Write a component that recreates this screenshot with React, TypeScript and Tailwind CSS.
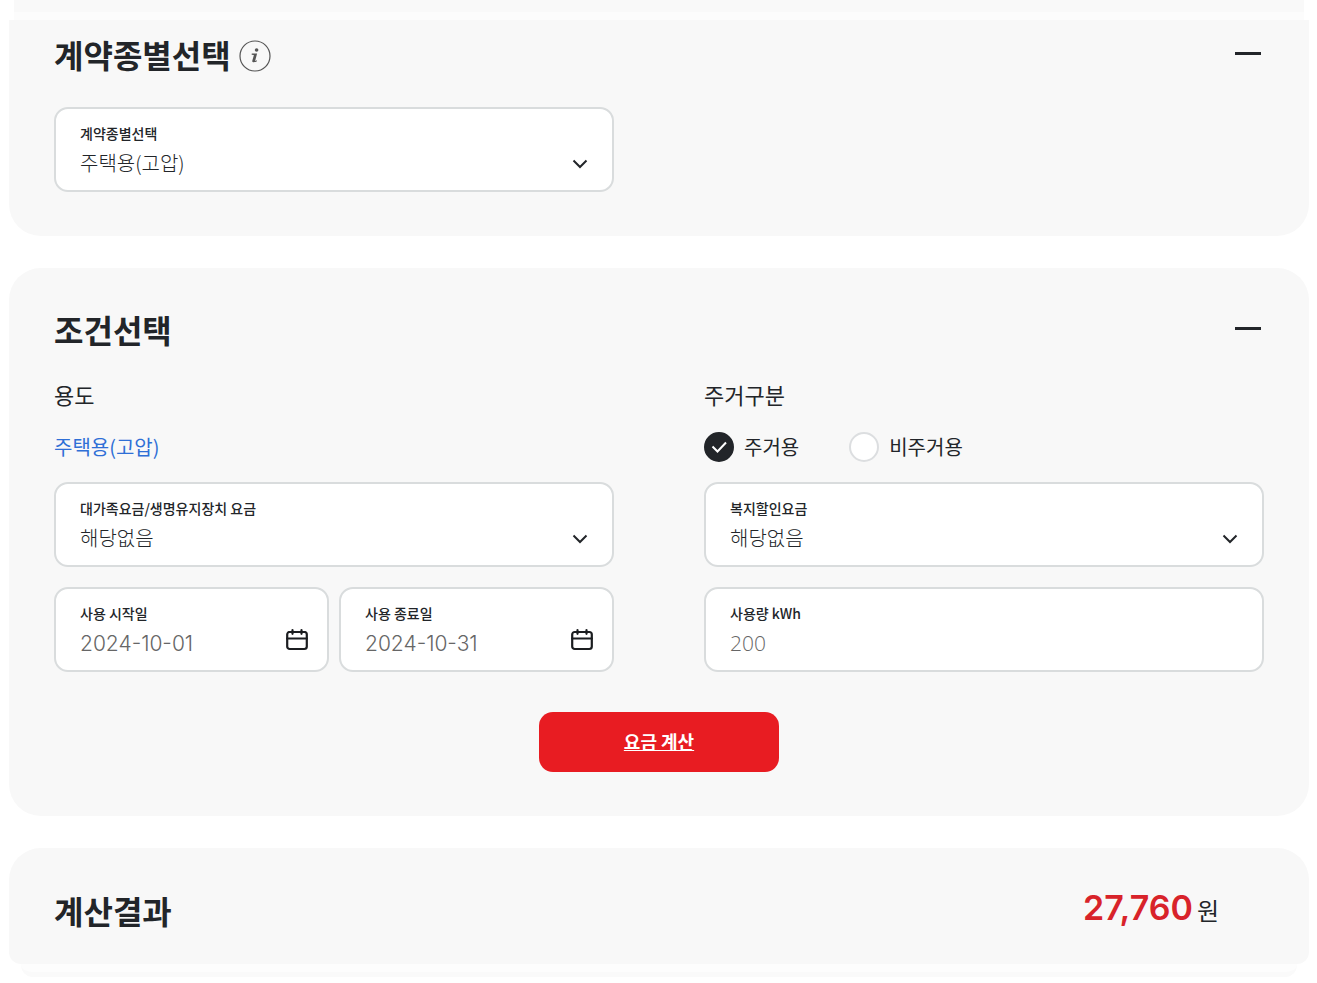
import { useState } from 'react';
import type { ReactNode } from 'react';

const boxClass =
  'rounded-[14px] border-2 border-[#d9dcdd] bg-white px-6 pt-[14px] pb-[11px] focus-within:border-[#222529]';

interface SelectBoxProps {
  id: string;
  label: string;
  options: string[];
}

function SelectBox({ id, label, options }: SelectBoxProps) {
  return (
    <div className={`relative ${boxClass}`}>
      <label htmlFor={id} className="block text-sm leading-5 font-medium">
        {label}
      </label>
      <select
        id={id}
        className="mt-1 block h-8 w-full appearance-none bg-transparent text-xl font-light text-[#222529] outline-none"
      >
        {options.map(option => (
          <option key={option}>{option}</option>
        ))}
      </select>
      <svg
        className="pointer-events-none absolute right-6 bottom-[18px] h-4 w-4"
        viewBox="0 0 16 16"
        fill="none"
        stroke="#222529"
        strokeWidth="2"
      >
        <path d="M1.5 4.5 8 11l6.5-6.5" />
      </svg>
    </div>
  );
}

interface DateBoxProps {
  id: string;
  label: string;
  defaultValue: string;
}

function DateBox({ id, label, defaultValue }: DateBoxProps) {
  return (
    <div className={`min-w-0 flex-1 ${boxClass}`}>
      <label htmlFor={id} className="block text-sm leading-5 font-medium">
        {label}
      </label>
      <div className="mt-1 flex items-start">
        <input
          id={id}
          type="text"
          defaultValue={defaultValue}
          className="h-8 w-full min-w-0 bg-transparent font-['Inter',sans-serif] text-[21px] font-light text-[#666] outline-none"
        />
        <button type="button" aria-label={`${label} 선택`} className="-mr-[6px] shrink-0">
          <svg
            className="mt-px h-6 w-6"
            viewBox="0 0 24 24"
            fill="none"
            stroke="#1b1d20"
            strokeWidth="2.2"
            strokeLinecap="round"
          >
            <rect x="2.2" y="4" width="19.6" height="17" rx="2.5" />
            <path d="M2.2 10.5h19.6M7.5 2.2v3.6M16.5 2.2v3.6" />
          </svg>
        </button>
      </div>
    </div>
  );
}

interface RadioProps {
  label: string;
  checked: boolean;
  onChange: () => void;
}

function Radio({ label, checked, onChange }: RadioProps) {
  return (
    <label className="flex items-center gap-[10px] text-xl leading-[30px]">
      <span className="relative flex">
        <input
          type="radio"
          name="residence"
          checked={checked}
          onChange={onChange}
          className="h-[30px] w-[30px] appearance-none rounded-full border-2 border-[#dcdee0] bg-white checked:border-[#222529] checked:bg-[#222529]"
        />
        {checked && (
          <svg
            className="pointer-events-none absolute inset-0 h-[30px] w-[30px]"
            viewBox="0 0 30 30"
            fill="none"
            stroke="#fff"
            strokeWidth="2"
          >
            <path d="M8.5 14.5 13.5 19.5 22 10.5" />
          </svg>
        )}
      </span>
      {label}
    </label>
  );
}

interface PanelHeaderProps {
  title: string;
  open: boolean;
  onToggle: () => void;
  children?: ReactNode;
}

function PanelHeader({ title, open, onToggle, children }: PanelHeaderProps) {
  return (
    <div className="flex items-center justify-between">
      <div className="flex items-center gap-2">
        <h2 className="text-[32px] leading-[48px] font-bold">{title}</h2>
        {children}
      </div>
      <button
        type="button"
        aria-label={title}
        aria-expanded={open}
        onClick={onToggle}
        className="mr-[3px] mb-[2px] flex h-[26px] w-[26px] items-center"
      >
        <span className="h-[3px] w-full bg-[#222529]" />
      </button>
    </div>
  );
}

function InfoIcon() {
  return (
    <svg className="mt-1 h-8 w-8" viewBox="0 0 32 32" fill="none">
      <circle cx="16" cy="16" r="15" stroke="#555" strokeWidth="1.2" />
      <circle cx="17.6" cy="10" r="1.8" fill="#555" />
      <path d="M12.8 13.6h5.3l-2 7.3 1.9-.6-.3 1.2c-1.6.9-4.9 1.5-4.4-.7l1.6-5.9-2.3-.1z" fill="#555" />
    </svg>
  );
}

export default function App() {
  const [residence, setResidence] = useState('주거용');
  const [contractOpen, setContractOpen] = useState(true);
  const [conditionOpen, setConditionOpen] = useState(true);

  return (
    <main className="bg-white pr-2 pl-[9px] font-['Noto_Sans_CJK_KR',sans-serif] text-[#222529]">
      <div className="mx-[5px] h-5 border-t-[12px] border-[#f9f9f9] bg-[#fcfcfc]" />
      <section className="rounded-b-[32px] bg-[#f8f8f8] px-[45px] pt-[10px] pb-11">
        <PanelHeader
          title="계약종별선택"
          open={contractOpen}
          onToggle={() => setContractOpen(!contractOpen)}
        >
          <button type="button" aria-label="도움말">
            <InfoIcon />
          </button>
        </PanelHeader>
        {contractOpen && (
          <div className="mt-[29px] grid grid-cols-2 gap-x-[90px]">
            <SelectBox
              id="contract"
              label="계약종별선택"
              options={['주택용(고압)', '주택용(저압)', '일반용']}
            />
          </div>
        )}
      </section>

      <section className="mt-8 rounded-[32px] bg-[#f8f8f8] px-[45px] pt-[37px] pb-11">
        <PanelHeader
          title="조건선택"
          open={conditionOpen}
          onToggle={() => setConditionOpen(!conditionOpen)}
        />
        {conditionOpen && (
          <>
            <div className="mt-[25px] grid grid-cols-2 gap-x-[90px] gap-y-5">
              <div>
                <h3 className="text-[22px] leading-8">용도</h3>
                <p className="mt-[22px] text-xl leading-[30px] text-[#2f6fd6]">주택용(고압)</p>
              </div>
              <div>
                <h3 className="text-[22px] leading-8">주거구분</h3>
                <div className="mt-[22px] flex gap-[50px]">
                  {['주거용', '비주거용'].map(name => (
                    <Radio
                      key={name}
                      label={name}
                      checked={residence === name}
                      onChange={() => setResidence(name)}
                    />
                  ))}
                </div>
              </div>
              <SelectBox
                id="family"
                label="대가족요금/생명유지장치 요금"
                options={['해당없음', '대가족', '생명유지장치']}
              />
              <SelectBox
                id="welfare"
                label="복지할인요금"
                options={['해당없음', '장애인', '기초생활']}
              />
              <div className="flex gap-[10px]">
                <DateBox id="start" label="사용 시작일" defaultValue="2024-10-01" />
                <DateBox id="end" label="사용 종료일" defaultValue="2024-10-31" />
              </div>
              <div className={boxClass}>
                <label htmlFor="usage" className="block text-sm leading-5 font-medium">
                  사용량 kWh
                </label>
                <input
                  id="usage"
                  type="text"
                  inputMode="numeric"
                  defaultValue="200"
                  className="mt-1 block h-8 w-full bg-transparent font-['Open_Sans',sans-serif] text-[21px] font-light text-[#666] outline-none"
                />
              </div>
            </div>
            <button
              type="button"
              className="mx-auto mt-10 block h-[60px] w-60 rounded-[14px] bg-[#e81c22] pb-[2px] text-lg font-bold text-white underline"
            >
              요금 계산
            </button>
          </>
        )}
      </section>

      <section className="mt-8 flex items-center justify-between rounded-t-[32px] rounded-b-xl bg-[#f8f8f8] pt-[37px] pr-[90px] pb-[30px] pl-[45px]">
        <h2 className="text-[32px] leading-[48px] font-bold">계산결과</h2>
        <p className="mb-1 flex items-baseline gap-1 text-2xl">
          <strong className="font-['Inter',sans-serif] text-[34px] font-semibold text-[#d8232a]">
            27,760
          </strong>
          원
        </p>
      </section>
      <div className="mx-3 h-[13px] rounded-b-xl border-b-[5px] border-[#fafafa] bg-[#fdfdfd]" />
    </main>
  );
}
